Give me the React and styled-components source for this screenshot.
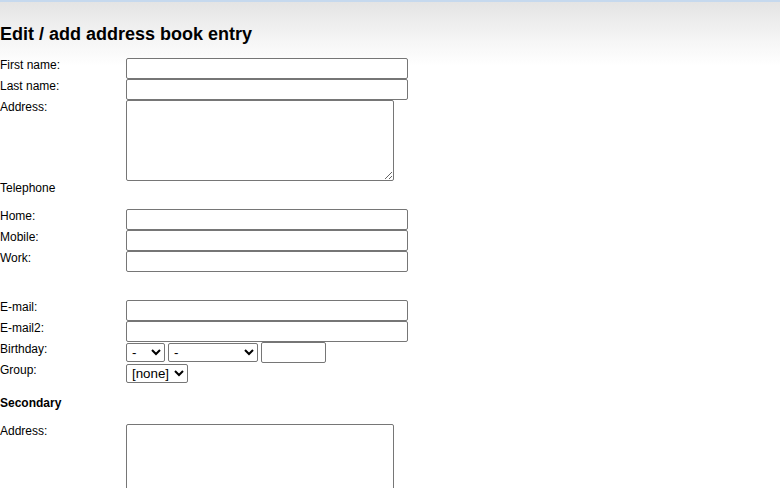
import React from 'react';
import styled, { createGlobalStyle } from 'styled-components';

const GlobalStyle = createGlobalStyle`
  html, body {
    margin: 0;
    padding: 0;
    background: #fff;
  }
  body {
    font-family: "Liberation Sans", Arial, sans-serif;
    font-size: 12px;
    color: #000;
  }
`;

const Page = styled.div`
  min-height: 488px;
  background: linear-gradient(#e4e4e4 0px, #f6f6f6 40px, #fff 64px) no-repeat;
  background-size: 100% 64px;
  border-top: 2px solid #c6d9ee;
`;

const Title = styled.h1`
  margin: 22px 0 13px;
  font-size: 18px;
  font-weight: bold;
  line-height: 21px;
`;

const FieldGrid = styled.div`
  display: grid;
  grid-template-columns: 126px auto;
  align-items: start;
  margin-top: ${(p) => p.$top || 0}px;
`;

const Label = styled.label`
  display: block;
  line-height: 14px;
`;

const SectionLabel = styled.div`
  line-height: 14px;
  font-weight: ${(p) => (p.$bold ? 'bold' : 'normal')};
  margin: ${(p) => p.$margin};
`;

const TextInput = styled.input`
  display: block;
  box-sizing: border-box;
  width: ${(p) => p.$width || 282}px;
  height: 21px;
  margin: 0;
  padding: 1px 2px;
  border: 1px solid #767676;
  border-radius: 2px;
  background: #fff;
  font-family: "Liberation Sans", Arial, sans-serif;
  font-size: 13.33px;
`;

const TextArea = styled.textarea`
  display: block;
  box-sizing: border-box;
  width: 268px;
  height: 81px;
  margin: 0;
  padding: 2px;
  border: 1px solid #767676;
  border-radius: 2px;
  font-family: "Liberation Mono", monospace;
  font-size: 13.33px;
`;

const Inline = styled.div`
  display: flex;
  align-items: center;
  gap: 3px;
  height: ${(p) => p.$height || 21}px;
`;

const Select = styled.select`
  box-sizing: border-box;
  width: ${(p) => p.$width}px;
  height: ${(p) => p.$height || 19}px;
  margin: 0;
  padding: 0 0 0 1px;
  border: 1px solid #767676;
  border-radius: 2px;
  background: #fff;
  color: #000;
  font-family: "Liberation Sans", Arial, sans-serif;
  font-size: 13.33px;
`;

function Field({ label, children }) {
  return (
    <>
      <Label>{label}</Label>
      <div>{children}</div>
    </>
  );
}

export default function App() {
  return (
    <>
      <GlobalStyle />
      <Page>
        <Title>Edit / add address book entry</Title>
        <form>
          <FieldGrid>
            <Field label="First name:">
              <TextInput type="text" />
            </Field>
            <Field label="Last name:">
              <TextInput type="text" />
            </Field>
            <Field label="Address:">
              <TextArea />
            </Field>
          </FieldGrid>

          <SectionLabel $margin="0 0 14px">Telephone</SectionLabel>

          <FieldGrid>
            <Field label="Home:">
              <TextInput type="text" />
            </Field>
            <Field label="Mobile:">
              <TextInput type="text" />
            </Field>
            <Field label="Work:">
              <TextInput type="text" />
            </Field>
          </FieldGrid>

          <FieldGrid $top={28}>
            <Field label="E-mail:">
              <TextInput type="text" />
            </Field>
            <Field label="E-mail2:">
              <TextInput type="text" />
            </Field>
            <Field label="Birthday:">
              <Inline>
                <Select $width={39} defaultValue="-">
                  <option>-</option>
                </Select>
                <Select $width={90} defaultValue="-">
                  <option>-</option>
                </Select>
                <TextInput type="text" $width={65} />
              </Inline>
            </Field>
            <Field label="Group:">
              <Inline $height={20}>
                <Select $width={62} defaultValue="[none]">
                  <option>[none]</option>
                </Select>
              </Inline>
            </Field>
          </FieldGrid>

          <SectionLabel $bold $margin="13px 0 14px">Secondary</SectionLabel>

          <FieldGrid>
            <Field label="Address:">
              <TextArea />
            </Field>
          </FieldGrid>
        </form>
      </Page>
    </>
  );
}
